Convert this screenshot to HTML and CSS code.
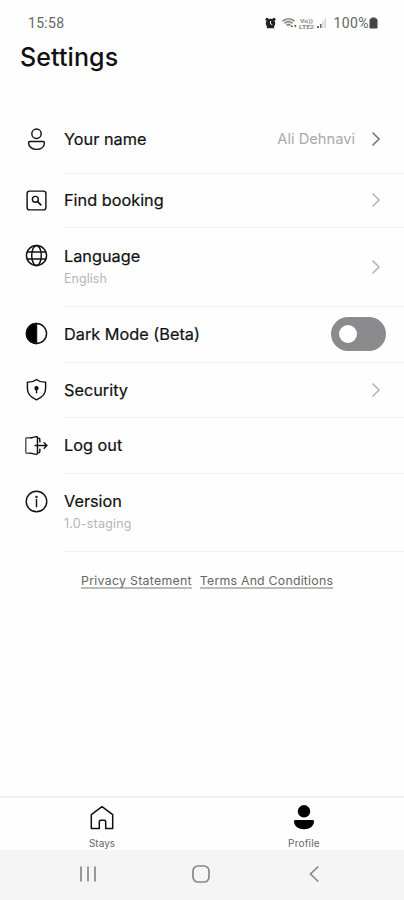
FILE: index.html
```html
<!DOCTYPE html>
<html lang="en">
<head>
<meta charset="utf-8">
<meta name="viewport" content="width=device-width, initial-scale=1">
<title>Settings</title>
<link rel="stylesheet" href="styles.css">
</head>
<body>
<div class="screen">
  <header class="status">
    <span class="clock">15:58</span>
    <span class="indicators">
      <svg width="61" height="14" viewBox="0 0 61 14">
        <g fill="#222"><circle cx="5.500" cy="7.400" r="4.700"/><circle cx="2" cy="3.200" r="1.500"/><circle cx="9" cy="3.200" r="1.500"/><path d="M1.500 12.300l1-2h6l1 2z"/></g>
        <path d="M5.500 5v2.800l1.800.8" fill="none" stroke="#fff" stroke-width="1"/>
        <path d="M17.500 5Q23.500 .5 29.500 5M19.500 7.200Q23.500 4.200 27.500 7.200M21.500 9.300Q23.500 7.800 25.500 9.300" fill="none" stroke="#666" stroke-width="1.200"/>
        <path d="M17.500 5Q23.500 .5 29.500 5L23.500 11z" fill="#999" opacity=".3"/>
        <path d="M25.500 11l1.300-2 1.300 2zM29 9l1.300 2.500L31.500 9z" fill="#555"/>
        <g class="volte"><text x="35" y="7" textLength="13" lengthAdjust="spacingAndGlyphs">Vo))</text><text x="34" y="13" textLength="15" lengthAdjust="spacingAndGlyphs">LTE2</text></g>
        <path d="M52 12v-2h2v2zM55 12V8h1.500v4z" fill="#666"/><path d="M57.300 12V5h1.300v7zM59.500 12V2.500H61V12z" fill="#d2d2d2"/>
      </svg>
      <span class="percent">100%</span>
      <svg class="battery" width="9" height="12" viewBox="0 0 9 12"><path d="M2.500 1.500V.5h4v1h.7Q8.500 1.500 8.500 3v7.500q0 1-1 1h-6q-1 0-1-1V3q0-1.500 1.300-1.500z" fill="#444"/></svg>
    </span>
  </header>
  <h1 class="title">Settings</h1>

  <main class="list">
    <div class="row row-name">
      <svg class="icon" viewBox="0 0 24 24"><circle cx="12" cy="6" r="4.900"/><path d="M5 14h14q1.300 0 1.300 1.300c0 4.600-3.900 7-8.300 7s-8.300-2.400-8.300-7Q3.700 14 5 14z"/></svg>
      <div class="body"><div class="text"><span class="label">Your name</span></div><span class="value">Ali Dehnavi</span><svg class="chevron dark" viewBox="0 0 10 16"><path d="M1.500 1.500L8 8l-6.500 6.500"/></svg></div>
    </div>
    <div class="row row-find">
      <svg class="icon" viewBox="0 0 24 24"><rect x="2.200" y="2.200" width="19.600" height="19.600" rx="2.500"/><circle cx="10.800" cy="10.800" r="3.100"/><path d="M13.200 13.200l3.300 3.300" stroke-width="1.800"/></svg>
      <div class="body"><div class="text"><span class="label">Find booking</span></div><svg class="chevron" viewBox="0 0 10 16"><path d="M1.500 1.500L8 8l-6.500 6.500"/></svg></div>
    </div>
    <div class="row row-double">
      <svg class="icon" viewBox="0 0 24 24"><circle cx="12" cy="12" r="10.500"/><ellipse cx="12" cy="12" rx="5" ry="10.500"/><path d="M2.500 8.300h19M2.500 15.700h19"/></svg>
      <div class="body"><div class="text"><span class="label">Language</span><span class="sub">English</span></div><svg class="chevron" viewBox="0 0 10 16"><path d="M1.500 1.500L8 8l-6.500 6.500"/></svg></div>
    </div>
    <div class="row row-dark">
      <svg class="icon" viewBox="0 0 24 24"><circle cx="12" cy="12" r="10.500"/><path d="M12 1.500a10.500 10.500 0 0 0 0 21z" fill="#000"/></svg>
      <div class="body"><div class="text"><span class="label">Dark Mode (Beta)</span></div><span class="toggle"><span class="knob"></span></span></div>
    </div>
    <div class="row row-security">
      <svg class="icon" viewBox="0 0 24 24"><path d="M12 1.500C9 4 6 4.500 2.500 4.300V11c0 6 4 9.500 9.500 11.800 5.500-2.300 9.500-5.800 9.500-11.800V4.300C18 4.500 15 4 12 1.500z"/><circle cx="12" cy="10.700" r="1.500" fill="#111"/><path d="M12 11v4.500"/></svg>
      <div class="body"><div class="text"><span class="label">Security</span></div><svg class="chevron" viewBox="0 0 10 16"><path d="M1.500 1.500L8 8l-6.500 6.500"/></svg></div>
    </div>
    <div class="row row-logout">
      <svg class="icon" viewBox="0 0 24 24"><path d="M7.500 4H2Q.8 4 .8 5.200v13.600Q.8 20 2 20H5.500" stroke="#555"/><path d="M5.500 20l6 1.300q1.500 0 1.500-1.500V4.200q0-1.500-1.500-1.500L6 4M13 4.500h1.500Q15.500 4.500 15.500 6v2M13 19.500h1.500q1 0 1-1.500v-2"/><path d="M10.500 12h12.500M20 9.200l2.800 2.800-2.800 2.800"/></svg>
      <div class="body"><div class="text"><span class="label">Log out</span></div></div>
    </div>
    <div class="row row-double row-last">
      <svg class="icon" viewBox="0 0 24 24"><circle cx="12" cy="12" r="10.700"/><path d="M12 10v7.500"/><circle cx="12" cy="7.200" r=".5" fill="#111"/></svg>
      <div class="body"><div class="text"><span class="label">Version</span><span class="sub version">1.0-staging</span></div></div>
    </div>
  </main>

  <div class="links"><a>Privacy Statement</a><a class="terms">Terms And Conditions</a></div>

  <nav class="tabs">
    <div class="tab"><svg width="26" height="26" viewBox="0 0 26 26"><path d="M2.300 9.700L13 1.700l10.700 8V23.500h-7V16.800q0-1.500-1.500-1.500h-3.400q-1.500 0-1.500 1.500v6.700h-8z" fill="none" stroke="#111" stroke-width="1.500" stroke-linejoin="round"/></svg><span>Stays</span></div>
    <div class="tab"><svg width="26" height="26" viewBox="0 0 26 26"><circle cx="13" cy="6.300" r="6.200"/><path d="M4.300 15h17.400q1.300 0 1.300 1.300c0 5-4.500 8-10 8s-10-3-10-8Q3 15 4.300 15z"/></svg><span class="profile">Profile</span></div>
  </nav>
  <footer class="system">
    <svg width="18" height="18" viewBox="0 0 18 18"><path d="M2 1.500v15M9 1.500v15M16 1.500v15"/></svg>
    <svg width="18" height="18" viewBox="0 0 18 18"><rect x="1" y="1" width="16" height="16" rx="5"/></svg>
    <svg width="18" height="18" viewBox="0 0 18 18"><path d="M13.300 1.500L5.500 9l7.800 7.500"/></svg>
  </footer>
</div>
</body>
</html>
```
FILE: styles.css
```css
* { box-sizing: border-box; }
body { margin: 0; background: #fefefe; color: #111; font-family: Inter, "Liberation Sans", sans-serif; }
.screen { width: 404px; height: 900px; display: flex; flex-direction: column; overflow: hidden; }
.status { height: 38px; padding: 8px 26px 0 28px; display: flex; justify-content: space-between; align-items: center; font-family: Roboto, sans-serif; color: #666; }
.clock { font-size: 14px; letter-spacing: .3px; }
.indicators { display: flex; align-items: center; }
.indicators svg { flex: none; }
.percent { font-size: 14px; margin-left: 8px; letter-spacing: .4px; }
.volte text { font: 700 6px Roboto, sans-serif; fill: #888; }
.title { margin: 0 0 0 20px; font-size: 25px; line-height: 38px; font-weight: 500; height: 67px; letter-spacing: .1px; }
.row { display: flex; height: 55.500px; padding-left: 25px; }
.row-name { height: 69px; }
.row-find { height: 54px; }
.row-double { height: 79px; }
.row-dark { height: 56px; }
.row-security { height: 55px; }
.row-last { height: 78.500px; }
.icon { width: 23px; height: 23px; margin-top: 16px; flex: none; fill: none; stroke: #111; stroke-width: 1.500; stroke-linejoin: round; stroke-linecap: round; }
.row-name .icon { margin-top: 23px; }
.row-find .icon { margin-top: 15px; }
.row-dark .icon, .row-security .icon { margin-top: 15px; }
.row-find .body, .row-dark .body { padding-bottom: 1px; }
.body { flex: 1; margin-left: 16px; padding-right: 23px; display: flex; align-items: center; border-bottom: 1.500px solid #f1f1f1; }
.text { flex: 1; display: flex; flex-direction: column; }
.label { font-size: 16.300px; line-height: 24px; white-space: nowrap; -webkit-text-stroke: .2px #111; }
.sub { font-size: 12.500px; line-height: 22px; color: #b5b5b5; letter-spacing: .05px; }
.version { letter-spacing: .2px; }
.value { font-size: 14.700px; color: #aaa; margin-right: 16px; }
.chevron { width: 10px; height: 16px; fill: none; stroke: #b5b5b5; stroke-width: 1.600; }
.chevron.dark { stroke: #777; }
.toggle { width: 55px; height: 34px; border-radius: 17px; background: #8b8b8d; margin-right: -5px; padding: 8px; }
.knob { display: block; width: 18px; height: 18px; border-radius: 50%; background: #fff; }
.links { display: flex; gap: 8px; padding: 20px 0 0 81px; font-size: 12.300px; line-height: 18px; letter-spacing: .3px; color: #666; white-space: nowrap; }
.links a { text-decoration: underline; text-decoration-color: #bbb; text-decoration-thickness: 2px; text-underline-offset: 2px; text-decoration-skip-ink: none; }
.terms { letter-spacing: .23px; }
.tabs { margin-top: auto; height: 54px; flex: none; border-top: 2px solid #f1f1f1; display: flex; padding-left: 1px; }
.tab { width: 202px; flex: none; padding-top: 7px; display: flex; flex-direction: column; align-items: center; font-size: 10px; line-height: 14px; color: #666; }
.tab span { margin-top: 5px; }
.profile { letter-spacing: .2px; }
.system { height: 50px; flex: none; background: #f5f5f5; display: flex; justify-content: space-between; padding: 15px 81px 0 79px; }
.system svg { fill: none; stroke: #888; stroke-width: 1.700; }
```
